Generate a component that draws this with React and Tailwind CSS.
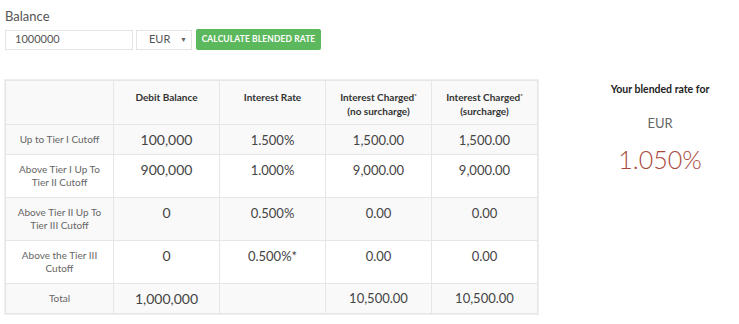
import React from 'react';

const rows = [
  { label: ['Up to Tier I Cutoff'], balance: '100,000', rate: '1.500%', noSur: '1,500.00', sur: '1,500.00', bg: 'bg-[#f9f9f9]' },
  { label: ['Above Tier I Up To', 'Tier II Cutoff'], balance: '900,000', rate: '1.000%', noSur: '9,000.00', sur: '9,000.00', bg: 'bg-white' },
  { label: ['Above Tier II Up To', 'Tier III Cutoff'], balance: '0', rate: '0.500%', noSur: '0.00', sur: '0.00', bg: 'bg-[#f9f9f9]' },
  { label: ['Above the Tier III', 'Cutoff'], balance: '0', rate: '0.500%*', noSur: '0.00', sur: '0.00', bg: 'bg-white' },
];

const App = () => {
  return (
    <div className="w-[739px] h-[324px] bg-white text-[#444] font-['Lato','Open_Sans',sans-serif] overflow-hidden">
      <div className="pl-[5px] pt-[8px]">
        <div className="text-[13px] leading-[16px] text-[#555]">Balance</div>
        <div className="flex items-center mt-[5px]">
          <div className="w-[128px] h-[20px] border border-[#e3e3e3] flex items-center pl-[9px] text-[11px] text-[#555]">
            1000000
          </div>
          <div className="w-[56px] h-[20px] ml-[3px] border border-[#e3e3e3] flex items-center justify-between pl-[12px] pr-[4px] text-[11px] text-[#555]">
            <span>EUR</span>
            <span className="text-[7px] text-[#666]">▼</span>
          </div>
          <button className="ml-[4px] w-[125px] h-[21px] rounded-[2px] bg-[#5cb85c] text-white text-[8.5px] font-bold tracking-[0.1px] uppercase">
            Calculate Blended Rate
          </button>
        </div>
      </div>

      <div className="flex mt-[29px]">
        <div className="ml-[4px] border border-[#efefef] h-fit">
          <table className="border-collapse table-fixed w-[532px]">
            <colgroup>
              <col className="w-[108px]" />
              <col className="w-[106px]" />
              <col className="w-[106px]" />
              <col className="w-[106px]" />
              <col className="w-[106px]" />
            </colgroup>
            <thead>
              <tr className="bg-[#f9f9f9] h-[44px]">
                <th className="border border-[#e6e6e6]"></th>
                <th className="border border-[#e6e6e6] align-top pt-[9px] text-[10px] leading-[14px] font-bold text-[#333]">Debit Balance</th>
                <th className="border border-[#e6e6e6] align-top pt-[9px] text-[10px] leading-[14px] font-bold text-[#333]">Interest Rate</th>
                <th className="border border-[#e6e6e6] align-top pt-[9px] text-[10px] leading-[14px] font-bold text-[#333]">
                  Interest Charged<sup className="text-[6px]">*</sup>
                  <br />
                  (no surcharge)
                </th>
                <th className="border border-[#e6e6e6] align-top pt-[9px] text-[10px] leading-[14px] font-bold text-[#333]">
                  Interest Charged<sup className="text-[6px]">*</sup>
                  <br />
                  (surcharge)
                </th>
              </tr>
            </thead>
            <tbody>
              {rows.map((r, i) => (
                <tr key={i} className={`${r.bg} ${r.label.length > 1 ? 'h-[43px]' : 'h-[30px]'}`}>
                  <td className="border border-[#e6e6e6] align-top pt-[8px] text-center text-[10px] leading-[13px] text-[#666]">
                    {r.label.map((l, j) => (
                      <div key={j}>{l}</div>
                    ))}
                  </td>
                  <td className="border border-[#e6e6e6] align-top pt-[7px] text-center text-[14px] leading-[16px] text-[#444]">{r.balance}</td>
                  <td className="border border-[#e6e6e6] align-top pt-[7px] text-center text-[13px] leading-[16px] text-[#444]">{r.rate}</td>
                  <td className="border border-[#e6e6e6] align-top pt-[7px] text-center text-[13px] leading-[16px] text-[#444]">{r.noSur}</td>
                  <td className="border border-[#e6e6e6] align-top pt-[7px] text-center text-[13px] leading-[16px] text-[#444]">{r.sur}</td>
                </tr>
              ))}
              <tr className="bg-[#f9f9f9] h-[30px]">
                <td className="border border-[#e6e6e6] text-center text-[10px] text-[#666]">Total</td>
                <td className="border border-[#e6e6e6] text-center text-[14px] text-[#444]">1,000,000</td>
                <td className="border border-[#e6e6e6]"></td>
                <td className="border border-[#e6e6e6] text-center text-[13px] text-[#444]">10,500.00</td>
                <td className="border border-[#e6e6e6] text-center text-[13px] text-[#444]">10,500.00</td>
              </tr>
            </tbody>
          </table>
        </div>

        <div className="ml-[43px] w-[156px] flex flex-col items-center pt-[3px]">
          <div className="text-[10.5px] font-bold text-[#222] leading-[14px]">Your blended rate for</div>
          <div className="mt-[19px] text-[13px] text-[#666] leading-[16px]">EUR</div>
          <div className="mt-[13px] text-[25px] font-light text-[#a9473c] leading-[30px]">1.050%</div>
        </div>
      </div>
    </div>
  );
};

export default App;
